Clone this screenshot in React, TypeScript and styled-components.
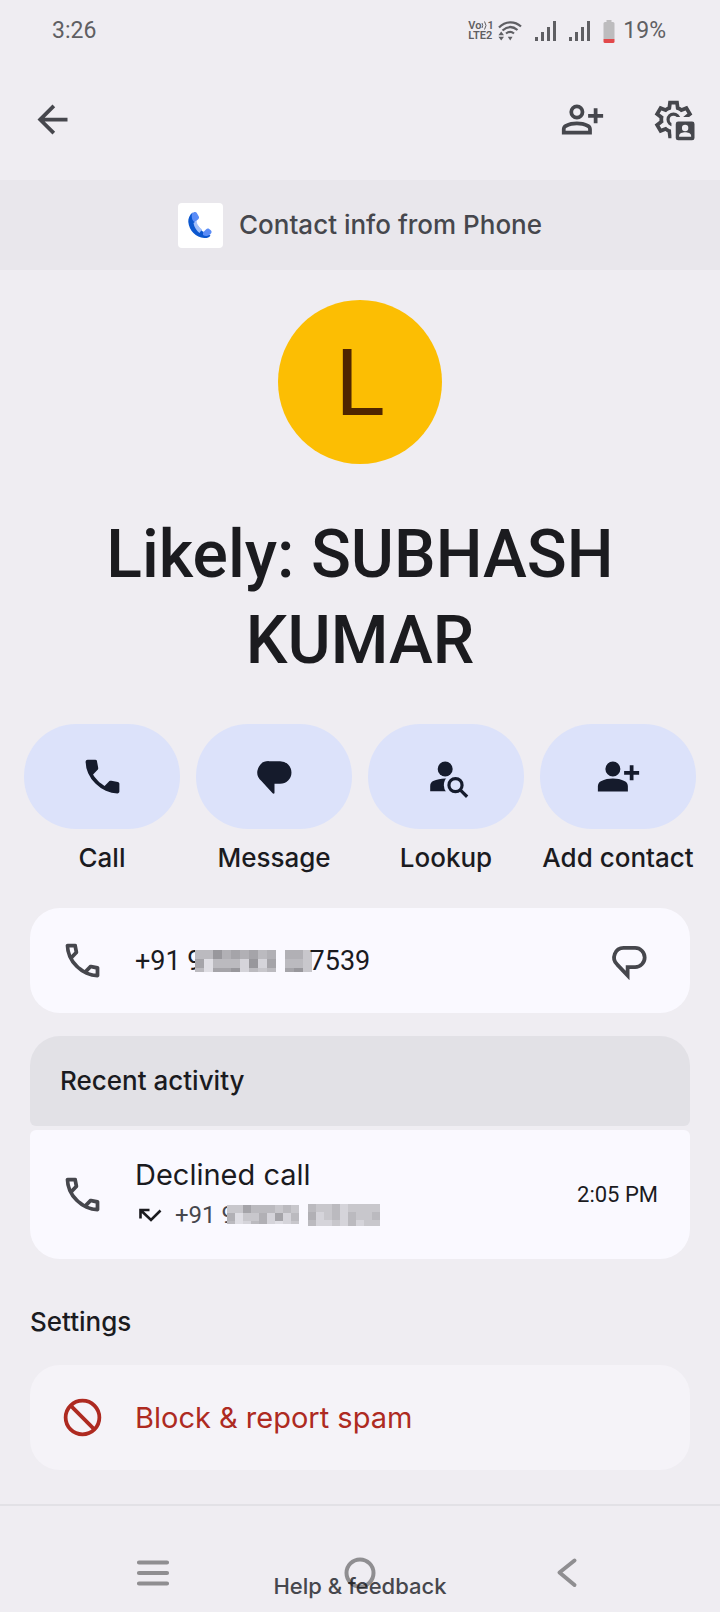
import React from 'react';
import styled, { createGlobalStyle } from 'styled-components';
import { MdArrowBack } from 'react-icons/md';

const color = {
  page: '#efedf2',
  band: '#e9e7ec',
  header: '#e2e1e6',
  card: '#faf9ff',
  softCard: '#f5f3f8',
  pill: '#dce2fa',
  pillIcon: '#151b2c',
  text: '#1b1b1f',
  muted: '#46474d',
  status: '#5f5f63',
  nav: 'rgba(0, 0, 0, 0.4)',
  danger: '#ae2a21',
};

const GlobalStyle = createGlobalStyle`
  * { box-sizing: border-box; }
  body {
    margin: 0;
    background: ${color.page};
    color: ${color.text};
    font-family: Inter, Roboto, sans-serif;
    font-size: 26px;
    line-height: 32px;
  }
  button {
    border: 0;
    padding: 0;
    background: none;
    color: inherit;
    font: inherit;
    cursor: pointer;
  }
  a { color: inherit; text-decoration: none; }
  h1, h2, p { margin: 0; font-weight: 500; }
  svg { display: block; flex: none; }
`;

const Page = styled.div`
  position: relative;
  display: flex;
  flex-direction: column;
  min-height: 100vh;
`;

/* Status bar */

const StatusBar = styled.div`
  display: flex;
  align-items: center;
  height: 60px;
  padding: 2px 54px 0 52px;
  color: ${color.status};
  font-family: Roboto, sans-serif;
  font-size: 23px;
`;

const StatusIcons = styled.div`
  display: flex;
  align-items: center;
  gap: 13px;
  margin-left: auto;
`;

const NetworkGroup = styled.div`
  display: flex;
  align-items: center;
  gap: 5px;
`;

const BatteryGroup = styled.div`
  display: flex;
  align-items: center;
  gap: 8px;
`;

const VoLte = styled.div`
  display: flex;
  flex-direction: column;
  width: 25px;
  font-size: 11px;
  line-height: 10px;
  font-weight: 600;
`;

const VoLteRow = styled.div`
  display: flex;
  justify-content: space-between;
`;

/* Top app bar */

const AppBar = styled.header`
  display: flex;
  align-items: center;
  height: 120px;
  padding: 0 24px 2px 30px;
  color: ${color.muted};
`;

const BarActions = styled.div`
  display: flex;
  gap: 46px;
  margin-left: auto;
`;

const SourceBand = styled.div`
  display: flex;
  align-items: center;
  justify-content: center;
  gap: 16px;
  height: 90px;
  background: ${color.band};
  color: ${color.muted};
  font-weight: 500;
`;

const AppTile = styled.span`
  display: block;
  border-radius: 4px;
  background: #fff;
`;

/* Identity */

const Avatar = styled.div`
  display: flex;
  align-items: center;
  justify-content: center;
  width: 164px;
  height: 164px;
  margin: 30px auto 48px;
  padding-top: 4px;
  border-radius: 50%;
  background: #fcbe03;
  color: #4f2500;
  font-family: Roboto, sans-serif;
  font-size: 92px;
`;

const Name = styled.h1`
  padding: 0 30px;
  font-family: Roboto, sans-serif;
  font-size: 66px;
  line-height: 86px;
  text-align: center;
`;

const Actions = styled.div`
  display: grid;
  grid-template-columns: repeat(4, 1fr);
  gap: 16px;
  margin: 40px 24px 34px;
`;

const Action = styled.button`
  display: flex;
  flex-direction: column;
  align-items: center;
  gap: 13px;
  font-weight: 500;
  white-space: nowrap;
`;

const Pill = styled.span`
  display: flex;
  align-items: center;
  justify-content: center;
  width: 100%;
  height: 105px;
  border-radius: 52px;
  background: ${color.pill};
  color: ${color.pillIcon};
`;

/* Cards */

const Cards = styled.main`
  display: flex;
  flex-direction: column;
  padding: 0 30px;
`;

const Card = styled.div<{ $position?: 'single' | 'last' }>`
  display: flex;
  align-items: center;
  gap: 30px;
  padding: ${(p) => (p.$position === 'last' ? '12px 32px 12px 30px' : '12px 38px 12px 30px')};
  min-height: ${(p) => (p.$position === 'last' ? 129 : 105)}px;
  border-radius: ${(p) => (p.$position === 'last' ? '6px 6px 30px 30px' : '30px')};
  background: ${color.card};
`;

const BlockButton = styled.button`
  display: flex;
  align-items: center;
  gap: 30px;
  min-height: 105px;
  padding: 0 30px;
  border-radius: 30px;
  background: ${color.softCard};
  color: ${color.danger};
  font-size: 29px;
  text-align: left;
`;

const CardIcon = styled.span`
  color: ${color.muted};
`;

const IconButton = styled.button`
  margin-left: auto;
  color: ${color.muted};
`;

const SectionHeader = styled.h2`
  display: flex;
  align-items: center;
  height: 90px;
  margin: 23px 0 4px;
  padding: 0 30px;
  border-radius: 30px 30px 6px 6px;
  background: ${color.header};
  font-size: 26px;
`;

const SectionTitle = styled.h2`
  margin: 47px 0 27px;
  font-size: 26px;
`;

const PhoneLink = styled.a`
  display: flex;
  align-items: center;
  font-family: Roboto, sans-serif;
  font-size: 27px;
`;

const SubPhone = styled.span`
  display: flex;
  align-items: center;
  font-family: Roboto, sans-serif;
  font-size: 24px;
  color: ${color.muted};
`;

const HiddenDigits = styled.span`
  display: flex;
  align-items: center;
  gap: 9px;
  margin: 0 -2px 0 -8px;
`;

const CallInfo = styled.div`
  display: flex;
  flex-direction: column;
  line-height: 40px;
`;

const CallTitle = styled.span`
  font-size: 29px;
`;

const CallDetail = styled.div`
  display: flex;
  align-items: center;
  gap: 10px;
  height: 40px;
`;

const CallTime = styled.time`
  margin-left: auto;
  font-family: Roboto, sans-serif;
  font-size: 22px;
`;

/* Footer and system navigation */

const Footer = styled.footer`
  display: flex;
  flex-direction: column;
  align-items: center;
  margin-top: 34px;
  padding: 64px 0 10px;
  border-top: 2px solid ${color.header};
  color: ${color.muted};
  font-size: 22px;
  font-weight: 500;
`;

const SystemNav = styled.nav`
  position: absolute;
  right: 0;
  bottom: 0;
  left: 0;
  display: grid;
  grid-template-columns: repeat(3, 1fr);
  align-items: center;
  justify-items: center;
  height: 78px;
  padding: 0 50px;
  color: ${color.nav};
  pointer-events: none;
`;

const NavButton = styled.button`
  pointer-events: auto;
`;

/* Icons */

const ICON = 45;

const symbol = (d: string) => () => (
  <svg width={ICON} height={ICON} viewBox="0 -960 960 960" fill="currentColor" aria-hidden="true">
    <path d={d} />
  </svg>
);

const callShape =
  'M798-120q-125 0-247-54.5T329-329Q229-429 174.5-551T120-798q0-18 12-30t30-12h162q14 0 25 9.5t13 22.5l26 140q2 16-1 27t-11 19l-97 98q20 37 47.5 71.5T387-386q31 31 65 57.5t72 48.5l94-94q9-9 23.5-13.5T670-390l138 28q14 4 23 14.5t9 23.5v162q0 18-12 30t-30 12Z';
const addShape =
  'M720-400v-120H600v-80h120v-120h80v120h120v80H800v120h-80Zm-360-80q-66 0-113-47t-47-113q0-66 47-113t113-47q66 0 113 47t47 113q0 66-47 113t-113 47ZM40-160v-112q0-34 17.5-62.5T104-378q62-31 126-46.5T360-440q66 0 130 15.5T616-378q29 15 46.5 43.5T680-272v112H40Z';

const CallFilled = symbol(callShape);
const CallOutline = symbol(
  callShape + 'M241-600l66-66-17-94h-89q5 41 14 81t26 79Zm358 358q39 17 79.5 27t81.5 13v-88l-94-19-67 67Z',
);
const AddFilled = symbol(addShape);
const AddOutline = symbol(
  addShape +
    'm80-80h480v-32q0-11-5.5-20T580-306q-54-27-109-40.5T360-360q-56 0-111 13.5T140-306q-9 5-14.5 14t-5.5 20v32Zm240-320q33 0 56.5-23.5T440-640q0-33-23.5-56.5T360-720q-33 0-56.5 23.5T280-640q0 33 23.5 56.5T360-560Z',
);

const MessageFilled = () => (
  <svg width={ICON} height={ICON} viewBox="0 0 24 24" fill="currentColor" aria-hidden="true">
    <path d="M9 3.8h6a6 6 0 0 1 0 12.1h-3v4.7c0 .6-.6.7-1 .3L4.9 14.3A6 6 0 0 1 9 3.8Z" />
  </svg>
);

const MessageOutline = () => (
  <svg
    width={ICON}
    height={ICON}
    viewBox="0 0 24 24"
    fill="none"
    stroke="currentColor"
    strokeWidth="2"
    aria-hidden="true"
  >
    <path d="M9 5.3h6a5.1 5.1 0 0 1 0 10.2h-4v4.5L5.5 14.2A5.1 5.1 0 0 1 9 5.3Z" />
  </svg>
);

const Lookup = () => (
  <svg width={ICON} height={ICON} viewBox="0 0 24 24" aria-hidden="true">
    <mask id="lookup-cut">
      <path fill="#fff" d="M0 0h24v24H0z" />
      <circle cx="16.8" cy="16.6" r="6.2" fill="#000" />
    </mask>
    <g fill="currentColor">
      <circle cx="11.3" cy="8" r="4" />
      <path
        mask="url(#lookup-cut)"
        d="M3.3 19.8V17c0-1.2.6-2.1 1.6-2.6C6.8 13.5 9 13 11.3 13h4v6.8Z"
      />
    </g>
    <g fill="none" stroke="currentColor" strokeWidth="1.7">
      <circle cx="16.8" cy="16.6" r="3.5" />
      <path d="m19.3 19.1 3.7 3.7" />
    </g>
  </svg>
);

const Block = () => (
  <svg
    width={ICON}
    height={ICON}
    viewBox="0 0 24 24"
    fill="none"
    stroke="currentColor"
    strokeWidth="2"
    aria-hidden="true"
  >
    <circle cx="12" cy="12" r="9" />
    <path d="m5.3 5.3 13.4 13.4" />
  </svg>
);

const ContactSettings = () => (
  <svg width={ICON} height={ICON} viewBox="0 0 24 24" fill="currentColor" aria-hidden="true">
    <mask id="gear-cut">
      <path fill="#fff" d="M0 0h24v24H0z" />
      <path fill="#000" d="M10.9 13h.9v-2.3H24V24H10.9z" />
    </mask>
    <g mask="url(#gear-cut)">
      <path
        transform="translate(0 24) scale(.025)"
        d="m370-80-16-128q-13-5-24.5-12T307-235l-119 50L78-375l103-78q-1-7-1-13.5v-27q0-6.5 1-13.5L78-585l110-190 119 50q11-8 23-15t24-12l16-128h220l16 128q13 5 24.5 12t22.5 15l119-50 110 190-103 78q1 7 1 13.5v27q0 6.5-2 13.5l103 78-110 190-118-50q-11 8-23 15t-24 12L590-80H370Zm70-80h79l14-106q31-8 57.5-23.5T639-327l99 41 39-68-86-65q5-14 7-29.5t2-31.5q0-16-2-31.5t-7-29.5l86-65-39-68-99 42q-22-23-48.5-38.5T533-694l-13-106h-79l-14 106q-31 8-57.5 23.5T321-633l-99-41-39 68 86 64q-5 15-7 30t-2 32q0 16 2 31t7 30l-86 65 39 68 99-42q22 23 48.5 38.5T427-266l13 106Z"
      />
      <circle cx="12" cy="12" r="2.9" fill="none" stroke="currentColor" strokeWidth="1.7" />
    </g>
    <rect x="13.2" y="13.1" width="10" height="10" rx="1.3" />
    <g fill={color.page}>
      <circle cx="18.2" cy="16.5" r="1.7" />
      <path d="M15 21.2v-.6c0-1.2 1.8-1.8 3.2-1.8s3.2.6 3.2 1.8v.6Z" />
    </g>
  </svg>
);

const PhoneAppLogo = () => (
  <svg width="45" height="45" viewBox="0 0 45 45" aria-hidden="true">
    <path
      fill="#0b57cf"
      d="M14.5 9.5C11.5 12 10 15.5 10.3 19c.7 8.5 7.7 15.7 16 16 2.5.1 5-.3 6.2-2.5L24 28l-6-7.5-1.5-2.500Z"
    />
    <path fill="#a1bffa" d="m15.5 20 3.2-2.2c-.3 2.7 2.3 6.7 5.3 8.7l-2.6 3.5c-3-2.5-5.300-6-5.900-10Z" />
    <path
      fill="#5a8cf7"
      d="M14 10.5c1.5-1.6 4-2 4.800-.6l2 3.600c.5 1.200.2 2.200-.8 3l-3.500 2.800c-2-2-3.300-4-2.500-8.800ZM25 29.500l3.200-3.300c.8-.8 2-.9 3-.2l1.600 1.300c1 .9 1 2.300.2 3.300-2 2.700-5.500 3-8 1.400Z"
    />
  </svg>
);

const DeclinedArrow = () => (
  <svg
    width="30"
    height="26"
    viewBox="0 0 30 26"
    fill="none"
    stroke={color.text}
    strokeWidth="2.6"
    role="img"
    aria-label="Declined"
  >
    <path d="m25.500 8.500-9.500 9.500L6 8.500M5.500 16.500v-8.500h9" />
  </svg>
);

const Signal = () => (
  <svg width="21" height="20" viewBox="0 0 21 20" fill="currentColor" aria-hidden="true">
    <path d="M0 16h3v4H0zM6 11h3v9H6zM12 6h3v14h-3zM18 0h3v20h-3z" />
  </svg>
);

const Wifi = () => (
  <svg width="24" height="20" viewBox="0 0 24 20" aria-hidden="true">
    <g fill="none" stroke="currentColor" strokeWidth="2.2">
      <path d="M1 6.5C7.5-.5 17 0 23 5.5" />
      <path d="M4.500 9.500c5-4.500 10.500-4.200 15-.5" />
      <path d="M8 12.500c3-2.300 5.500-2.100 8 0" />
    </g>
    <path fill="currentColor" d="m3.200 10.500 2.800 3.700H.4ZM.4 15.700H6l-2.800 3.800ZM9.800 15.700h4.800l-2.400 3.800Z" />
  </svg>
);

const Battery = () => (
  <svg width="12" height="23" viewBox="0 0 12 23" aria-hidden="true">
    <path fill="#bdbcbe" d="M3.500 0h5v2H10a1.500 1.500 0 0 1 1.500 1.500V19H.5V3.500A1.500 1.500 0 0 1 2 2h1.500Z" />
    <path fill="#e2484b" d="M.5 19h11v2.500A1.500 1.500 0 0 1 10 23H2a1.500 1.500 0 0 1-1.500-1.500Z" />
  </svg>
);

const SoundArcs = () => (
  <svg width="6" height="9" viewBox="0 0 6 9" fill="none" stroke="currentColor" aria-hidden="true">
    <path d="M1 2q1.500 2.500 0 5M3.500.5q3 4 0 8" />
  </svg>
);

/* Each character is the lightness of one square of the pixelated digits. */
const shades: Record<string, string> = {
  a: '#98979c',
  b: '#a5a4a9',
  c: '#b1b0b5',
  d: '#bbbabf',
  e: '#c8c7cc',
  f: '#d5d4da',
  g: '#dfdee4',
};

function Pixels({ rows, cell, height }: { rows: string[]; cell: number; height: number }) {
  const width = rows[0].length * cell;
  return (
    <svg
      width={width}
      height={height}
      viewBox={`0 0 ${width} ${height}`}
      shapeRendering="crispEdges"
      role="img"
      aria-label="Hidden digits"
    >
      {rows.flatMap((row, y) =>
        [...row].map((s, x) => (
          <rect key={`${x}-${y}`} x={x * cell} y={y * cell} width={cell} height={cell} fill={shades[s]} />
        )),
      )}
    </svg>
  );
}

const actions = [
  { label: 'Call', Icon: CallFilled },
  { label: 'Message', Icon: MessageFilled },
  { label: 'Lookup', Icon: Lookup },
  { label: 'Add contact', Icon: AddFilled },
];

export default function App() {
  return (
    <Page>
      <GlobalStyle />
      <StatusBar>
        <span>3:26</span>
        <StatusIcons>
          <NetworkGroup>
            <VoLte>
              <VoLteRow>
                <span>Vo</span>
                <SoundArcs />
                <span>1</span>
              </VoLteRow>
              <span>LTE2</span>
            </VoLte>
            <Wifi />
          </NetworkGroup>
          <Signal />
          <Signal />
          <BatteryGroup>
            <Battery />
            <span>19%</span>
          </BatteryGroup>
        </StatusIcons>
      </StatusBar>

      <AppBar>
        <button aria-label="Back">
          <MdArrowBack size={ICON} />
        </button>
        <BarActions>
          <button aria-label="Add contact">
            <AddOutline />
          </button>
          <button aria-label="Contact settings">
            <ContactSettings />
          </button>
        </BarActions>
      </AppBar>

      <SourceBand>
        <AppTile>
          <PhoneAppLogo />
        </AppTile>
        <span>Contact info from Phone</span>
      </SourceBand>

      <Avatar>L</Avatar>
      <Name>Likely: SUBHASH KUMAR</Name>

      <Actions>
        {actions.map(({ label, Icon }) => (
          <Action key={label}>
            <Pill>
              <Icon />
            </Pill>
            <span>{label}</span>
          </Action>
        ))}
      </Actions>

      <Cards>
        <Card>
          <CardIcon>
            <CallOutline />
          </CardIcon>
          <PhoneLink href="#call">
            <span>+91 9</span>
            <HiddenDigits>
              <Pixels rows={['ddacbcbdc', 'bgdddfafb', 'dgbbafded']} cell={9} height={22} />
              <Pixels rows={['cce', 'dde', 'bae']} cell={9} height={22} />
            </HiddenDigits>
            <span>7539</span>
          </PhoneLink>
          <IconButton aria-label="Message this number">
            <MessageOutline />
          </IconButton>
        </Card>

        <SectionHeader>Recent activity</SectionHeader>
        <Card $position="last">
          <CardIcon>
            <CallOutline />
          </CardIcon>
          <CallInfo>
            <CallTitle>Declined call</CallTitle>
            <CallDetail>
              <DeclinedArrow />
              <SubPhone>
                <span>+91 9</span>
                <HiddenDigits>
                  <Pixels rows={['eebdddede', 'cgeecfbfd', 'dgfdcfgfe']} cell={8} height={19} />
                  <Pixels rows={['deedfeeee', 'cfedfdeed', 'dffefdfee']} cell={8} height={22} />
                </HiddenDigits>
              </SubPhone>
            </CallDetail>
          </CallInfo>
          <CallTime>2:05 PM</CallTime>
        </Card>

        <SectionTitle>Settings</SectionTitle>
        <BlockButton>
          <Block />
          <span>Block &amp; report spam</span>
        </BlockButton>
      </Cards>

      <Footer>
        <a href="#help">Help &amp; feedback</a>
      </Footer>

      <SystemNav aria-label="System navigation">
        <NavButton aria-label="Recent apps">
          <svg width="34" height="34" viewBox="0 0 34 34" stroke="currentColor" strokeWidth="4.2" strokeLinecap="round">
            <path d="M3 6.500h28M3 17h28M3 27.500h28" />
          </svg>
        </NavButton>
        <NavButton aria-label="Home">
          <svg width="34" height="34" viewBox="0 0 34 34" fill="none" stroke="currentColor" strokeWidth="4">
            <circle cx="17" cy="17" r="13.5" />
          </svg>
        </NavButton>
        <NavButton aria-label="Go back">
          <svg
            width="34"
            height="34"
            viewBox="0 0 34 34"
            fill="none"
            stroke="currentColor"
            strokeWidth="4"
            strokeLinecap="round"
            strokeLinejoin="round"
          >
            <path d="M24.500 4.500 9.500 16.500l15 12.500" />
          </svg>
        </NavButton>
      </SystemNav>
    </Page>
  );
}
